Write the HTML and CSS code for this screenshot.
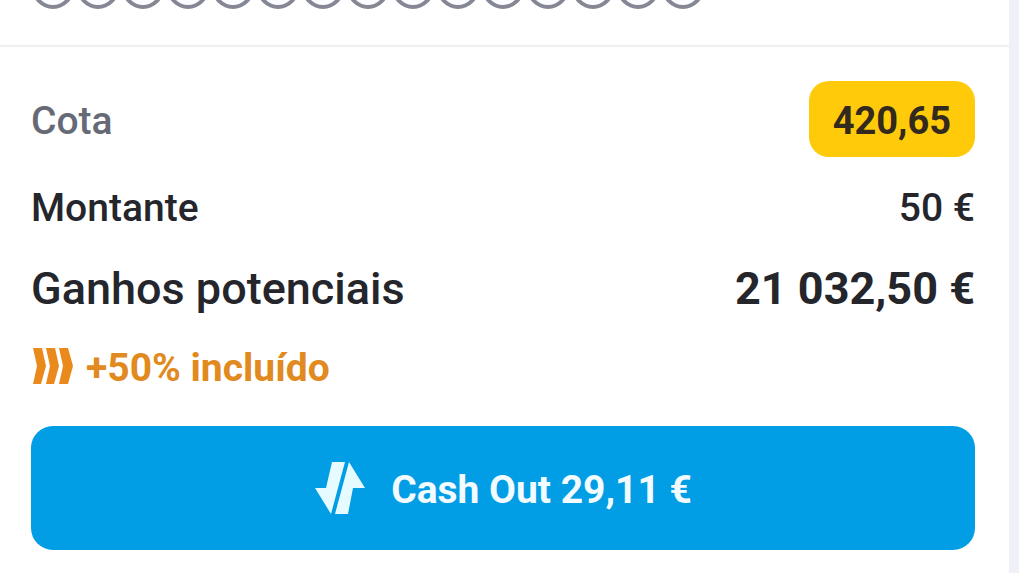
FILE: index.html
```html
<!DOCTYPE html>
<html lang="pt">
<head>
<meta charset="utf-8">
<meta name="viewport" content="width=device-width, initial-scale=1">
<title>Cash Out</title>
<link rel="stylesheet" href="styles.css">
</head>
<body>
<main class="slip">
  <div class="events" aria-hidden="true">
    <i class="event"></i><i class="event"></i><i class="event"></i><i class="event"></i><i class="event"></i>
    <i class="event"></i><i class="event"></i><i class="event"></i><i class="event"></i><i class="event"></i>
    <i class="event"></i><i class="event"></i><i class="event"></i><i class="event"></i><i class="event"></i>
  </div>
  <section class="summary">
    <dl class="rows">
      <div class="row row-odds"><dt>Cota</dt><dd class="badge">420,65</dd></div>
      <div class="row row-stake"><dt>Montante</dt><dd>50 €</dd></div>
      <div class="row row-win"><dt>Ganhos potenciais</dt><dd>21 032,50 €</dd></div>
    </dl>
    <p class="boost">
      <svg class="boost-icon" viewBox="0 0 42 38" aria-hidden="true">
        <path d="M2 1h9l4 18-5 18H2l4-18zM15 1h9l4 18-5 18h-8l4-18zM28 1h9l5 18-5 18h-9l4-18z"/>
      </svg>
      <span>+50% incluído</span>
    </p>
    <button class="cashout" type="button">
      <svg class="cashout-icon" viewBox="0 0 52 54" aria-hidden="true">
        <path d="M18 1H31L17 53 1 27H12zM35 1 51 27H39L34 53H21z"/>
      </svg>
      <span>Cash Out 29,11 €</span>
    </button>
  </section>
</main>
</body>
</html>
```
FILE: styles.css
```css
* {
  box-sizing: border-box;
}

body {
  margin: 0;
  background: #f0f0f8;
  color: #24262c;
  font-family: Roboto, "Liberation Sans", sans-serif;
  font-size: 39px;
  font-weight: 500;
}

.slip {
  min-height: 100vh;
  margin-right: 10px;
  background: #fff;
}

.events {
  display: flex;
  align-items: flex-end;
  gap: 3px;
  height: 47px;
  padding: 0 32px 36px;
  border-bottom: 2px solid #f0f0f1;
  overflow: hidden;
}

.event {
  flex: none;
  width: 42px;
  height: 42px;
  border: 4px solid #858894;
  border-radius: 50%;
  background: #fafcff;
}

.summary {
  padding: 34px 34px 22px 31px;
}

.rows,
.boost {
  margin: 0;
}

.row {
  display: flex;
  align-items: center;
  justify-content: space-between;
}

.row dd {
  margin: 0;
}

.row-odds dt {
  padding-top: 4px;
  color: #666a76;
}

.badge {
  padding: 4px 24px 0;
  border-radius: 20px;
  background: #ffca0a;
  color: #33291c;
  font-size: 38px;
  font-weight: 700;
  line-height: 72px;
}

.row-stake {
  height: 96px;
  padding-top: 6px;
}

.row-win {
  height: 68px;
  padding-top: 2px;
  font-size: 45px;
}

.row-win dd {
  font-weight: 700;
}

.boost {
  display: flex;
  align-items: center;
  gap: 13px;
  height: 88px;
  padding-top: 2px;
  color: #e08a20;
  font-weight: 700;
}

.boost span,
.cashout span {
  padding-top: 4px;
}

.boost-icon {
  width: 42px;
  height: 38px;
  fill: #eb8a1c;
}

.cashout {
  display: flex;
  align-items: center;
  justify-content: center;
  gap: 25px;
  width: 100%;
  height: 124px;
  margin-top: 17px;
  padding: 0;
  border: 0;
  border-radius: 22px;
  background: #029ee5;
  color: #f2fbff;
  font: inherit;
  font-weight: 700;
}

.cashout-icon {
  width: 52px;
  height: 54px;
  fill: #e6fbff;
}
```
